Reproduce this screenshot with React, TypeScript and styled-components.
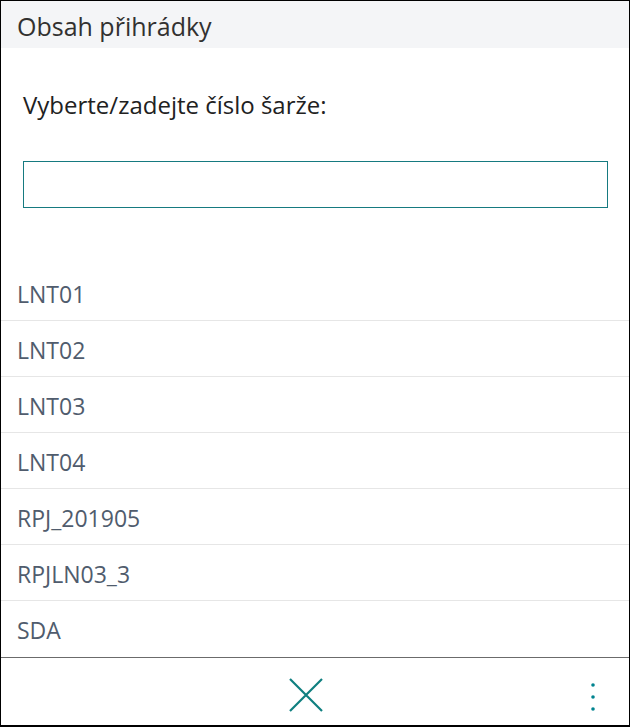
import React, { useState } from "react";
import styled, { createGlobalStyle } from "styled-components";

const GlobalStyle = createGlobalStyle`
  html, body {
    margin: 0;
    padding: 0;
    background: #ffffff;
  }
  * {
    box-sizing: border-box;
  }
`;

const lots = ["LNT01", "LNT02", "LNT03", "LNT04", "RPJ_201905", "RPJLN03_3", "SDA"];

const Frame = styled.div`
  width: 630px;
  height: 727px;
  border: 1px solid #000000;
  border-bottom-width: 2px;
  display: flex;
  flex-direction: column;
  font-family: "Open Sans", "Noto Sans", sans-serif;
  background: #ffffff;
  overflow: hidden;
`;

const Header = styled.div`
  height: 47px;
  flex: none;
  background: #f4f5f7;
  display: flex;
  align-items: center;
  padding: 3px 0 0 16px;
  font-size: 25px;
  color: #323130;
`;

const Body = styled.div`
  flex: 1;
  display: flex;
  flex-direction: column;
`;

const Prompt = styled.div`
  padding: 42px 22px 0;
  font-size: 24px;
  color: #212121;
  line-height: 30px;
`;

const LotInput = styled.input`
  display: block;
  margin: 41px 21px 0 22px;
  height: 47px;
  border: 1px solid #167a80;
  outline: none;
  font: inherit;
  font-size: 20px;
  padding: 0 10px;
`;

const List = styled.ul`
  list-style: none;
  margin: 57px 0 0;
  padding: 0;
`;

const Row = styled.li<{ $last?: boolean }>`
  height: 56px;
  display: flex;
  align-items: center;
  padding: 2px 0 0 16px;
  font-size: 23px;
  color: #505c6d;
  border-bottom: 1px solid ${({ $last }) => ($last ? "transparent" : "#e6e6e6")};
  cursor: pointer;
`;

const Footer = styled.div`
  flex: none;
  height: 69px;
  border-top: 1px solid #6b6b6b;
  display: flex;
  align-items: center;
  justify-content: center;
  padding: 6px 18px 0 0;
  position: relative;
`;

const IconButton = styled.button`
  border: none;
  background: none;
  padding: 0;
  cursor: pointer;
  display: flex;
  align-items: center;
  justify-content: center;
`;

const MoreButton = styled(IconButton)`
  position: absolute;
  right: 33px;
  top: 24px;
`;

export default function App() {
  const [value, setValue] = useState("");
  return (
    <>
      <GlobalStyle />
      <Frame>
        <Header>Obsah přihrádky</Header>
        <Body>
          <Prompt>Vyberte/zadejte číslo šarže:</Prompt>
          <LotInput value={value} onChange={(e) => setValue(e.target.value)} />
          <List>
            {lots.map((lot, i) => (
              <Row key={lot} $last={i === lots.length - 1}>
                {lot}
              </Row>
            ))}
          </List>
        </Body>
        <Footer>
          <IconButton aria-label="Zavřít">
            <svg width="34" height="34" viewBox="0 0 34 34">
              <path d="M1 1 L33 33 M33 1 L1 33" stroke="#0f7f80" strokeWidth="2.2" fill="none" />
            </svg>
          </IconButton>
          <MoreButton aria-label="Další">
            <svg width="6" height="30" viewBox="0 0 6 30">
              <circle cx="3" cy="3" r="1.8" fill="#00838f" />
              <circle cx="3" cy="15" r="1.8" fill="#00838f" />
              <circle cx="3" cy="27" r="1.8" fill="#00838f" />
            </svg>
          </MoreButton>
        </Footer>
      </Frame>
    </>
  );
}
